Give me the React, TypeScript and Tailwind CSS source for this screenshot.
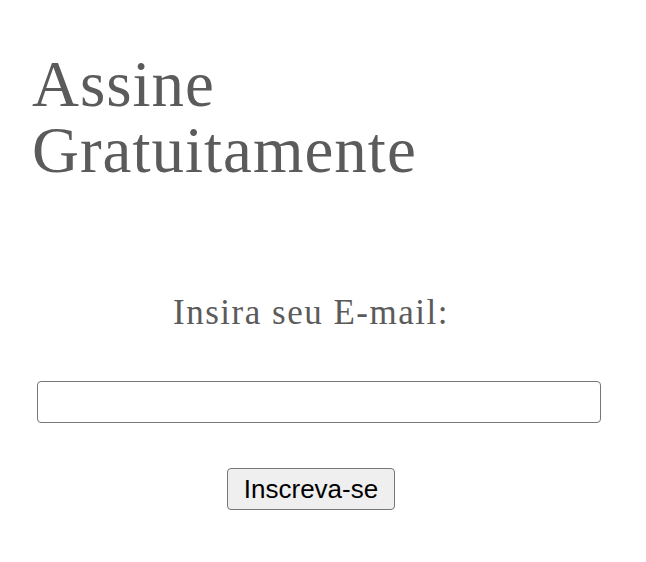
export default function App() {
  return (
    <div className="min-h-screen bg-white" style={{ fontFamily: '"Liberation Serif", serif' }}>
      <h1 className="pl-[32px] pt-[51px] text-[65px] leading-[66px] tracking-[1px] font-normal text-[#5b5b5b]">
        Assine
        <br />
        Gratuitamente
      </h1>

      <div className="flex w-[622px] flex-col items-center">
        <label
          htmlFor="email"
          className="mt-[110px] text-[35px] leading-[40px] tracking-[1.5px] text-[#5b5b5b]"
        >
          Insira seu E-mail:
        </label>
        <input
          id="email"
          type="email"
          className="ml-[37px] mt-[48px] h-[42px] w-[564px] self-start rounded-[4px] border border-[#767676] bg-white px-2 outline-none"
        />
        <button
          type="button"
          className="mt-[45px] h-[42px] w-[168px] rounded-[4px] border border-[#767676] bg-[#efefef] text-[26px] leading-none text-black"
          style={{ fontFamily: '"Liberation Sans", Arial, sans-serif' }}
        >
          Inscreva-se
        </button>
      </div>
    </div>
  )
}
